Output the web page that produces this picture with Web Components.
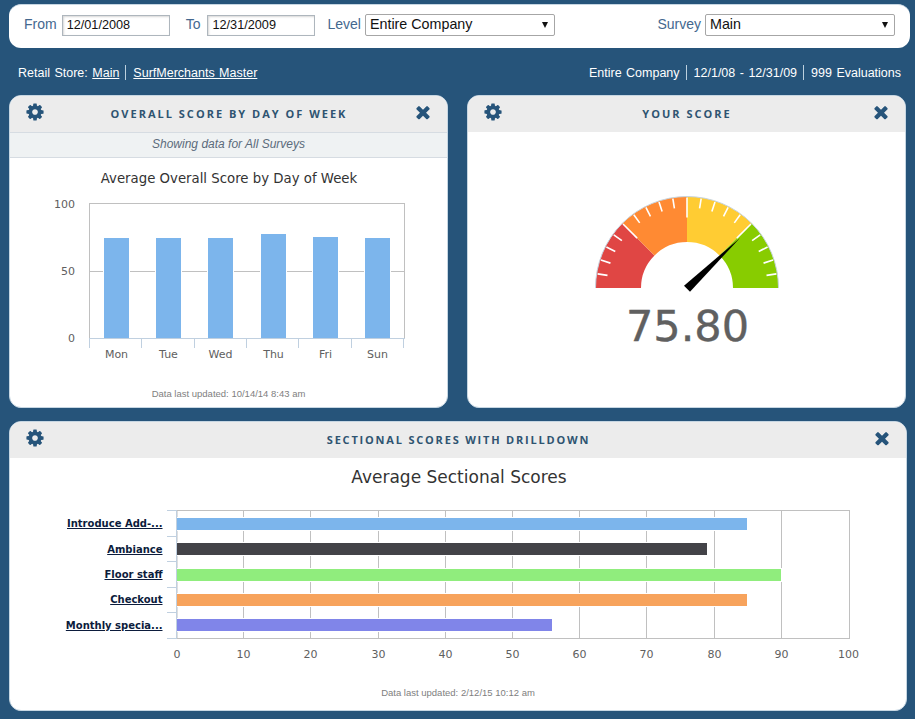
<!DOCTYPE html>
<html>
<head>
<meta charset="utf-8">
<title>Dashboard</title>
<style>
  html, body { margin: 0; padding: 0; background: #26547a; }
  body { font-family: "Liberation Sans", Arial, sans-serif; }
  .rejilla { display: grid; grid-template-columns: 439px 439px; column-gap: 19px; row-gap: 13px; }
</style>
</head>
<body>
<dash-app>
  <filter-bar></filter-bar>
  <info-bar></info-bar>
  <div class="rejilla">
    <dash-panel heading="Overall Score by Day of Week" note="Showing data for All Surveys" updated="Data last updated: 10/14/14 8:43 am" style="height:313px;--pie:8px">
      <day-chart></day-chart>
    </dash-panel>
    <dash-panel heading="Your Score" style="height:313px">
      <score-gauge value="75.80"></score-gauge>
    </dash-panel>
    <dash-panel heading="Sectional Scores with Drilldown" updated="Data last updated: 2/12/15 10:12 am" style="grid-column:1 / 3;width:898px;height:290px;--pie:12px;--espacio:1.8px">
      <section-chart></section-chart>
    </dash-panel>
  </div>
</dash-app>

<script>
const COG = 'M1152 896q0-106-75-181t-181-75-181 75-75 181 75 181 181 75 181-75 75-181zm512-109v222q0 12-8 23t-20 13l-185 28q-19 54-39 91 35 50 107 138 10 12 10 25t-9 23q-27 37-99 108t-94 71q-12 0-26-9l-138-108q-44 23-91 38-16 136-29 186-7 28-36 28h-222q-14 0-24.500-8.500t-11.500-21.500l-28-184q-49-16-90-37l-141 107q-10 9-25 9-14 0-25-11-126-114-165-168-7-10-7-23 0-12 8-23 15-21 51-66.500t54-70.500q-27-50-41-99l-183-27q-13-2-21-12.500t-8-23.500v-222q0-12 8-23t19-13l186-28q14-46 39-92-40-57-107-138-10-12-10-24 0-10 9-23 26-36 98.500-107.500t94.500-71.500q13 0 26 10l138 107q44-23 91-38 16-136 29-186 7-28 36-28h222q14 0 24.500 8.500t11.500 21.500l28 184q49 16 90 37l142-107q9-9 24-9 13 0 25 10 129 119 165 170 7 8 7 22 0 12-8 23-15 21-51 66.500t-54 70.500q26 50 41 98l183 28q13 2 21 12.500t8 23.500z';
const TIMES = 'M1490 1322q0 40-28 68l-136 136q-28 28-68 28t-68-28l-294-294-294 294q-28 28-68 28t-68-28l-136-136q-28-28-28-68t28-68l294-294-294-294q-28-28-28-68t28-68l136-136q28-28 68-28t68 28l294 294 294-294q28-28 68-28t68 28l136 136q28 28 28 68t-28 68l-294 294 294 294q28 28 28 68z';
const CHART_FONT = '"DejaVu Sans", Verdana, sans-serif';

class DashApp extends HTMLElement {
  constructor() {
    super();
    this.attachShadow({ mode: 'open' }).innerHTML = `
      <style>
        :host { display: block; padding: 4px 0 8px 9px; width: 906px; box-sizing: border-box; }
      </style>
      <slot></slot>`;
  }
}

class FilterBar extends HTMLElement {
  constructor() {
    super();
    const flecha = '<svg width="6" height="6"><path d="M0 0h6L3 6z" fill="#111"/></svg>';
    this.attachShadow({ mode: 'open' }).innerHTML = `
      <style>
        :host {
          display: flex; align-items: center; box-sizing: border-box;
          width: 901px; height: 44px; padding: 0 15px 4px 15px;
          background: #fff; border-top: 1px solid #c6d6e2; border-radius: 12px;
          font: 14px "Liberation Sans", Arial, sans-serif;
        }
        label { color: #44688f; margin-right: 5px; position: relative; top: -1px; }
        .campo {
          box-sizing: border-box; width: 108px; height: 21px; margin-right: 16px;
          border: 1px solid #aeb6bd; box-shadow: inset 1px 1px 2px #d8d8d8;
          padding: 0 0 0 4px; font-size: 12.7px; line-height: 19px; color: #111;
          position: relative; top: 1px;
        }
        .lista {
          box-sizing: border-box; width: 190px; height: 22px;
          border: 1px solid #a6a6a6; border-radius: 2px;
          padding-left: 4px; font-size: 14.3px; line-height: 21px; color: #111;
          display: flex; justify-content: space-between; align-items: center;
        }
        .lista svg { margin-right: 6px; }
        .hueco { flex: 1; }
      </style>
      <label>From</label><div class="campo">12/01/2008</div>
      <label style="margin-right:7px">To</label><div class="campo" style="margin-right:12px">12/31/2009</div>
      <label style="margin-right:4px">Level</label>
      <div class="lista"><span>Entire Company</span>${flecha}</div>
      <div class="hueco"></div>
      <label style="margin-right:4px">Survey</label>
      <div class="lista"><span>Main</span>${flecha}</div>`;
  }
}

class InfoBar extends HTMLElement {
  constructor() {
    super();
    this.attachShadow({ mode: 'open' }).innerHTML = `
      <style>
        :host {
          display: flex; justify-content: space-between; align-items: center;
          width: 892px; height: 47px; padding: 2px 0 0 9px; box-sizing: border-box;
          color: #fff; font: 12.5px "Liberation Sans", Arial, sans-serif;
          word-spacing: 1px;
        }
        a { color: #fff; text-decoration: underline; }
        i { display: inline-block; width: 1px; height: 15px; background: #bcd0de; margin: 0 7px 0 6px; vertical-align: -3px; }
      </style>
      <div>Retail Store: <a>Main</a><i></i><a>SurfMerchants Master</a></div>
      <div>Entire Company<i></i>12/1/08 - 12/31/09<i></i>999 Evaluations</div>`;
  }
}

class DashPanel extends HTMLElement {
  connectedCallback() {
    if (this.shadowRoot) return;
    const note = this.getAttribute('note');
    const updated = this.getAttribute('updated');
    this.attachShadow({ mode: 'open' }).innerHTML = `
      <style>
        :host {
          display: flex; flex-direction: column; box-sizing: border-box;
          background: #fff; border: 1px solid #c6d6e2; border-radius: 12px; overflow: hidden;
        }
        header {
          flex: none; height: 36px; display: flex; align-items: center;
          padding: 0 14px 0 15px; background: #ececec;
        }
        h2 {
          flex: 1; margin: 0; text-align: center; text-transform: uppercase;
          font: 700 11px "Open Sans", Lato, sans-serif; letter-spacing: var(--espacio, 2px); color: #2f5471;
          position: relative; top: -1px;
        }
        svg { flex: none; width: 20px; height: 20px; fill: #26547a; margin-top: -5px; }
        .note {
          flex: none; height: 24px; line-height: 23px; text-align: center;
          background: #eff2f3; border-top: 1px solid #d6dce2; border-bottom: 1px solid #d6dce2;
          font: italic 12px/23px "Liberation Sans", Arial, sans-serif; color: #5b6b7b;
        }
        .cuerpo { flex: 1; min-height: 0; }
        footer {
          flex: none; text-align: center; padding-bottom: var(--pie, 10px); color: #808080;
          font: 9.5px "Liberation Sans", Arial, sans-serif;
        }
      </style>
      <header>
        <svg viewBox="0 0 1792 1792"><path d="${COG}"/></svg>
        <h2>${this.getAttribute('heading')}</h2>
        <svg viewBox="0 0 1792 1792"><path d="${TIMES}"/></svg>
      </header>
      ${note ? `<div class="note">${note}</div>` : ''}
      <div class="cuerpo"><slot></slot></div>
      ${updated ? `<footer>${updated}</footer>` : ''}`;
  }
}

// los charts usan coordenadas de pagina en el viewBox
class DayChart extends HTMLElement {
  constructor() {
    super();
    const dias = [['Mon', 104, 238], ['Tue', 156, 238], ['Wed', 208, 238], ['Thu', 261, 234], ['Fri', 313, 237], ['Sun', 365, 238]];
    const ticks = [89.5, 141.5, 194.5, 246.5, 298.5, 351.5, 403.5];
    let s = '<rect x="89.5" y="203.5" width="315" height="135" fill="none" stroke="#c0c0c0"/>';
    s += '<path d="M89.5 271.5H404.5" stroke="#c0c0c0"/>';
    s += '<path d="M89 338.500H405" stroke="#c0d0e0"/>';
    ticks.forEach(x => { s += `<path d="M${x} 338V348" stroke="#c0d0e0"/>`; });
    dias.forEach(([d, x, y]) => {
      s += `<rect x="${x - 1}" y="${y}" width="27" height="${338 - y}" fill="#fff"/>`;
      s += `<rect x="${x}" y="${y}" width="25" height="${338 - y}" fill="#7cb5ec"/>`;
      s += `<text x="${x + 12.5}" y="358" text-anchor="middle" class="eje">${d}</text>`;
    });
    [['100', 208], ['50', 275], ['0', 342]].forEach(([t, y]) => {
      s += `<text x="75" y="${y}" text-anchor="end" class="eje">${t}</text>`;
    });
    this.attachShadow({ mode: 'open' }).innerHTML = `
      <style>
        :host { display: block; }
        svg { display: block; }
        text { font-family: ${CHART_FONT}; }
        .eje { font-size: 11px; fill: #606060; }
        .titulo { font-size: 13.3px; fill: #333; }
      </style>
      <svg width="437" height="230" viewBox="10 158 437 230">
        <text x="229" y="183" text-anchor="middle" class="titulo">Average Overall Score by Day of Week</text>
        ${s}
      </svg>`;
  }
}

class SectionChart extends HTMLElement {
  constructor() {
    super();
    const filas = [
      ['Introduce Add-...', 518, 747, '#7cb5ec', 527],
      ['Ambiance', 543, 707, '#434348', 553],
      ['Floor staff', 569, 781, '#90ed7d', 578],
      ['Checkout', 594, 747, '#f7a35c', 603],
      ['Monthly specia...', 619, 552, '#8085e9', 629]
    ];
    let s = '';
    for (let i = 0; i <= 10; i++) {
      const x = Math.round(177 + 67.2 * i) - 0.5 + (i === 0 ? 0.5 : 0);
      if (i > 0 && i < 10) s += `<path d="M${x} 510V638" stroke="#c0c0c0"/>`;
      s += `<text x="${x}" y="658" text-anchor="middle" class="eje">${i * 10}</text>`;
    }
    s += '<rect x="177" y="510.500" width="672.500" height="128" fill="none" stroke="#c0c0c0"/>';
    s += '<path d="M176.500 510V639" stroke="#c0d0e0"/>';
    [510.5, 536.5, 561.5, 587.5, 612.5, 638.5].forEach(y => {
      s += `<path d="M167 ${y}H177" stroke="#c0d0e0"/>`;
    });
    filas.forEach(([t, y, fin, color, base]) => {
      s += `<rect x="177" y="${y - 1}" width="${fin - 177 + 1}" height="14" fill="#fff"/>`;
      s += `<rect x="177" y="${y}" width="${fin - 177}" height="12" fill="${color}"/>`;
      s += `<text x="162.500" y="${base}" text-anchor="end" class="fila">${t}</text>`;
    });
    this.attachShadow({ mode: 'open' }).innerHTML = `
      <style>
        :host { display: block; }
        svg { display: block; }
        text { font-family: ${CHART_FONT}; }
        .eje { font-size: 11px; fill: #606060; }
        .titulo { font-size: 17px; fill: #333; }
        .fila { font-size: 10px; font-weight: bold; fill: #0c1c3c; text-decoration: underline; }
      </style>
      <svg width="896" height="225" viewBox="10 458 896 225">
        <text x="459" y="483" text-anchor="middle" class="titulo">Average Sectional Scores</text>
        ${s}
      </svg>`;
  }
}

class ScoreGauge extends HTMLElement {
  connectedCallback() {
    if (this.shadowRoot) return;
    const cx = 687, cy = 289, R = 91.5, r = 46;
    const punto = (rad, grados) => {
      const a = (180 - grados) * Math.PI / 180;
      return [cx + rad * Math.cos(a), cy - rad * Math.sin(a)];
    };
    const sector = (g0, g1, color) => {
      const [a, b] = punto(R, g0), [c, d] = punto(R, g1), [e, f] = punto(r, g1), [g, h] = punto(r, g0);
      return `<path d="M${a} ${b}A${R} ${R} 0 0 1 ${c} ${d}L${e} ${f}A${r} ${r} 0 0 0 ${g} ${h}Z" fill="${color}"/>`;
    };
    let s = sector(0, 45, '#e04644') + sector(45, 90, '#ff8a33') + sector(90, 135, '#ffcc33') + sector(135, 180, '#88cc00');
    s += `<path d="M${cx - R} ${cy}A${R} ${R} 0 0 1 ${cx + R} ${cy}" fill="none" stroke="#c6d4e0" stroke-width="1"/>`;
    for (let g = 9; g < 180; g += 9) {
      const largo = g % 45 === 0 ? 20 : 10;
      const [a, b] = punto(R - 1, g), [c, d] = punto(R - 1 - largo, g);
      s += `<line x1="${a}" y1="${b}" x2="${c}" y2="${d}" stroke="#fff" stroke-width="1.6"/>`;
    }
    s += '<path d="M684 286.700L740 239 690 292.700Z" fill="#000"/>';
    this.attachShadow({ mode: 'open' }).innerHTML = `
      <style>
        :host { display: block; }
        svg { display: block; }
        text { font: 43px ${CHART_FONT}; fill: #606060; stroke: #606060; stroke-width: 0.4px; }
      </style>
      <svg width="437" height="275" viewBox="468 133 437 275">
        ${s}
        <text x="687.500" y="342" text-anchor="middle">${this.getAttribute('value')}</text>
      </svg>`;
  }
}

customElements.define('dash-app', DashApp);
customElements.define('filter-bar', FilterBar);
customElements.define('info-bar', InfoBar);
customElements.define('dash-panel', DashPanel);
customElements.define('day-chart', DayChart);
customElements.define('section-chart', SectionChart);
customElements.define('score-gauge', ScoreGauge);
</script>
</body>
</html>
